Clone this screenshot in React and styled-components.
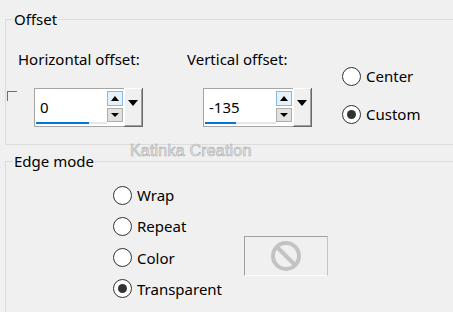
import React from 'react';
import styled, { createGlobalStyle } from 'styled-components';

const GlobalStyle = createGlobalStyle`
  html, body {
    margin: 0;
    padding: 0;
    background: #f0f0f0;
    overflow: hidden;
  }
  body {
    font-family: "Noto Sans", "Open Sans", sans-serif;
    font-size: 15px;
    color: #000;
  }
`;

const Dialog = styled.div`
  position: relative;
  width: 453px;
  height: 312px;
  overflow: hidden;
`;

const Group = styled.fieldset`
  margin: ${(p) => p.$top}px 0 0 5px;
  padding: 0;
  width: 470px;
  min-width: 0;
  border: 1px solid #dcdcdc;
`;

const Legend = styled.legend`
  margin-left: 7px;
  padding: 0 1px;
  line-height: 21px;
`;

const OffsetBody = styled.div`
  height: 114px;
  display: grid;
  grid-template-columns: 12px 169px 155px 1fr;
  align-items: start;
`;

const Corner = styled.div`
  margin: 61px 0 0 1px;
  width: 9px;
  height: 9px;
  border-top: 1px solid #6d6d6d;
  border-left: 1px solid #6d6d6d;
`;

const FieldColumn = styled.div`
  display: flex;
  flex-direction: column;
  padding-top: 19px;
`;

const Label = styled.div`
  line-height: 20px;
  white-space: nowrap;
`;

const Spin = styled.div`
  margin: 19px 0 0 16px;
  width: 109px;
  height: 39px;
  box-sizing: border-box;
  border: 1px solid #a5a5a5;
  background: #fff;
  display: flex;
`;

const Field = styled.div`
  width: 72px;
  display: flex;
  flex-direction: column;
  padding: 8px 0 0 1px;
  box-sizing: border-box;
`;

const Value = styled.div`
  height: 20px;
  line-height: 20px;
  padding-left: 4px;
`;

const Track = styled.div`
  margin-top: 5px;
  height: 2px;
  background: #e6e6e6;
  display: flex;
`;

const TrackFill = styled.div`
  width: ${(p) => p.$w}px;
  background: #0078d7;
`;

const Steppers = styled.div`
  display: flex;
  flex-direction: column;
  gap: 2px;
  padding-top: 2px;
`;

const Stepper = styled.div`
  width: 16px;
  height: ${(p) => (p.$up ? 15 : 14)}px;
  box-sizing: border-box;
  border: 1px solid ${(p) => (p.$hot ? '#86b8e8' : '#adadad')};
  background: ${(p) => (p.$hot ? '#e5f1fb' : '#e1e1e1')};
  display: flex;
  align-items: center;
  justify-content: center;
`;

const Tri = styled.span`
  width: 0;
  height: 0;
  border-left: ${(p) => p.$size}px solid transparent;
  border-right: ${(p) => p.$size}px solid transparent;
  ${(p) =>
    p.$up
      ? `border-bottom: ${p.$h}px solid #000;`
      : `border-top: ${p.$h}px solid #000;`}
`;

const DropButton = styled.div`
  margin: -1px -1px -1px 1px;
  width: 19px;
  box-sizing: border-box;
  background: #f0f0f0;
  box-shadow: inset -1px -1px #696969, inset 1px 1px #fff, inset -2px -2px #a0a0a0;
  display: flex;
  justify-content: center;
  padding: 12px 2px 0 0;
`;

const RadioColumn = styled.div`
  display: flex;
  flex-direction: column;
  gap: ${(p) => p.$gap}px;
  padding-top: ${(p) => p.$top}px;
`;

const RadioRow = styled.label`
  display: flex;
  align-items: center;
  gap: 5px;
  height: 20px;
  line-height: 20px;
  white-space: nowrap;
`;

const Circle = styled.span`
  width: 19px;
  height: 19px;
  box-sizing: border-box;
  border-radius: 50%;
  border: 1px solid #333;
  background: #fff;
  display: flex;
  align-items: center;
  justify-content: center;
  &::after {
    content: '';
    width: 9px;
    height: 9px;
    border-radius: 50%;
    background: ${(p) => (p.$on ? '#333' : 'transparent')};
  }
`;

const EdgeBody = styled.div`
  height: 200px;
  display: flex;
  align-items: flex-start;
  padding: 13px 0 0 107px;
`;

const EdgeRadios = styled(RadioColumn)`
  width: 131px;
  padding-top: 0;
`;

const Preview = styled.div`
  margin-top: 51px;
  width: 84px;
  height: 40px;
  box-sizing: border-box;
  border: 1px solid;
  border-color: #a0a0a0 #c4c4c4 #fff #a0a0a0;
  display: flex;
  align-items: center;
  justify-content: center;
`;

const Watermark = styled.div`
  position: absolute;
  left: 130px;
  top: 142px;
  font-family: "Liberation Sans", Arial, sans-serif;
  font-size: 16px;
  color: #f0f0f0;
  -webkit-text-stroke: 0.6px #a9a9a9;
  letter-spacing: 0.2px;
  pointer-events: none;
`;

function SpinBox({ value, fill }) {
  return (
    <Spin>
      <Field>
        <Value>{value}</Value>
        <Track>
          <TrackFill $w={fill} />
        </Track>
      </Field>
      <Steppers>
        <Stepper $up $hot>
          <Tri $up $size={4} $h={5} />
        </Stepper>
        <Stepper>
          <Tri $size={4} $h={4} />
        </Stepper>
      </Steppers>
      <DropButton>
        <Tri $size={5} $h={6} />
      </DropButton>
    </Spin>
  );
}

function Radio({ label, on }) {
  return (
    <RadioRow>
      <Circle $on={on} />
      {label}
    </RadioRow>
  );
}

export default function App() {
  return (
    <Dialog>
      <GlobalStyle />
      <Group $top={9}>
        <Legend>Offset</Legend>
        <OffsetBody>
          <Corner />
          <FieldColumn>
            <Label>Horizontal offset:</Label>
            <SpinBox value="0" fill={53} />
          </FieldColumn>
          <FieldColumn>
            <Label>Vertical offset:</Label>
            <SpinBox value="-135" fill={31} />
          </FieldColumn>
          <RadioColumn $top={36} $gap={18}>
            <Radio label="Center" />
            <Radio label="Custom" on />
          </RadioColumn>
        </OffsetBody>
      </Group>
      <Group $top={6}>
        <Legend>Edge mode</Legend>
        <EdgeBody>
          <EdgeRadios $gap={11.33}>
            <Radio label="Wrap" />
            <Radio label="Repeat" />
            <Radio label="Color" />
            <Radio label="Transparent" on />
          </EdgeRadios>
          <Preview>
            <svg width="32" height="32" viewBox="0 0 32 32">
              <circle cx="16" cy="16" r="13" fill="none" stroke="#c3c3c3" strokeWidth="4" />
              <line x1="7" y1="7" x2="25" y2="25" stroke="#c3c3c3" strokeWidth="4" />
            </svg>
          </Preview>
        </EdgeBody>
      </Group>
      <Watermark>Katinka Creation</Watermark>
    </Dialog>
  );
}
